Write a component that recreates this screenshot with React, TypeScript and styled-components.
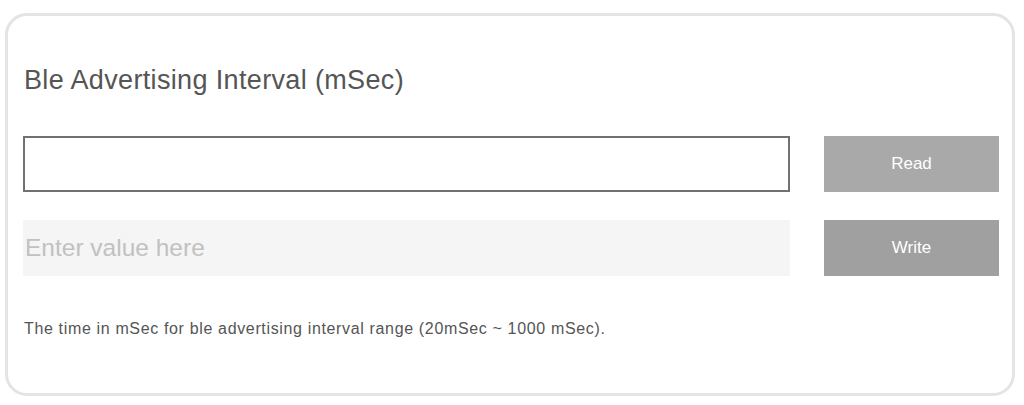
import * as React from "react";
import styled, { createGlobalStyle } from "styled-components";

const GlobalStyle = createGlobalStyle`
  html, body {
    margin: 0;
    padding: 0;
    background: #ffffff;
    font-family: "Liberation Sans", Arial, sans-serif;
  }
`;

const Page = styled.div`
  padding: 13px 0 0 5px;
`;

const Card = styled.section`
  box-sizing: border-box;
  width: 1010px;
  height: 383px;
  border: 3px solid #e4e4e4;
  border-radius: 22px;
  padding: 49px 13px 0 15px;
`;

const Title = styled.h2`
  margin: 0 0 41px 1px;
  font-size: 27px;
  line-height: 30px;
  font-weight: 400;
  letter-spacing: 0.35px;
  color: #555555;
`;

const Controls = styled.div`
  display: grid;
  grid-template-columns: 1fr 175px;
  column-gap: 34px;
  row-gap: 28px;
`;

const Field = styled.input<{ $filled?: boolean }>`
  box-sizing: border-box;
  height: 56px;
  margin: 0;
  padding: 0 2px;
  font-family: "Liberation Sans", Arial, sans-serif;
  font-size: 24.5px;
  color: #444444;
  outline: none;
  border: ${({ $filled }) => ($filled ? "none" : "2px solid #717171")};
  background: ${({ $filled }) => ($filled ? "#f5f5f5" : "#ffffff")};

  &::placeholder {
    color: #c1c1c1;
  }
`;

const Action = styled.button<{ $tone: string }>`
  height: 56px;
  margin: 0;
  border: none;
  background: ${({ $tone }) => $tone};
  color: #ffffff;
  font-family: "Liberation Sans", Arial, sans-serif;
  font-size: 17px;
  cursor: pointer;
`;

const Hint = styled.p`
  margin: 44px 0 0 1px;
  font-size: 16px;
  line-height: 18px;
  letter-spacing: 0.65px;
  color: #555555;
`;

export default function App() {
  const [value, setValue] = React.useState("");

  return (
    <Page>
      <GlobalStyle />
      <Card>
        <Title>Ble Advertising Interval (mSec)</Title>
        <Controls>
          <Field readOnly />
          <Action $tone="#a9a9a9">Read</Action>
          <Field
            $filled
            placeholder="Enter value here"
            value={value}
            onChange={(e) => setValue(e.target.value)}
          />
          <Action $tone="#a0a0a0">Write</Action>
        </Controls>
        <Hint>The time in mSec for ble advertising interval range (20mSec ~ 1000 mSec).</Hint>
      </Card>
    </Page>
  );
}
